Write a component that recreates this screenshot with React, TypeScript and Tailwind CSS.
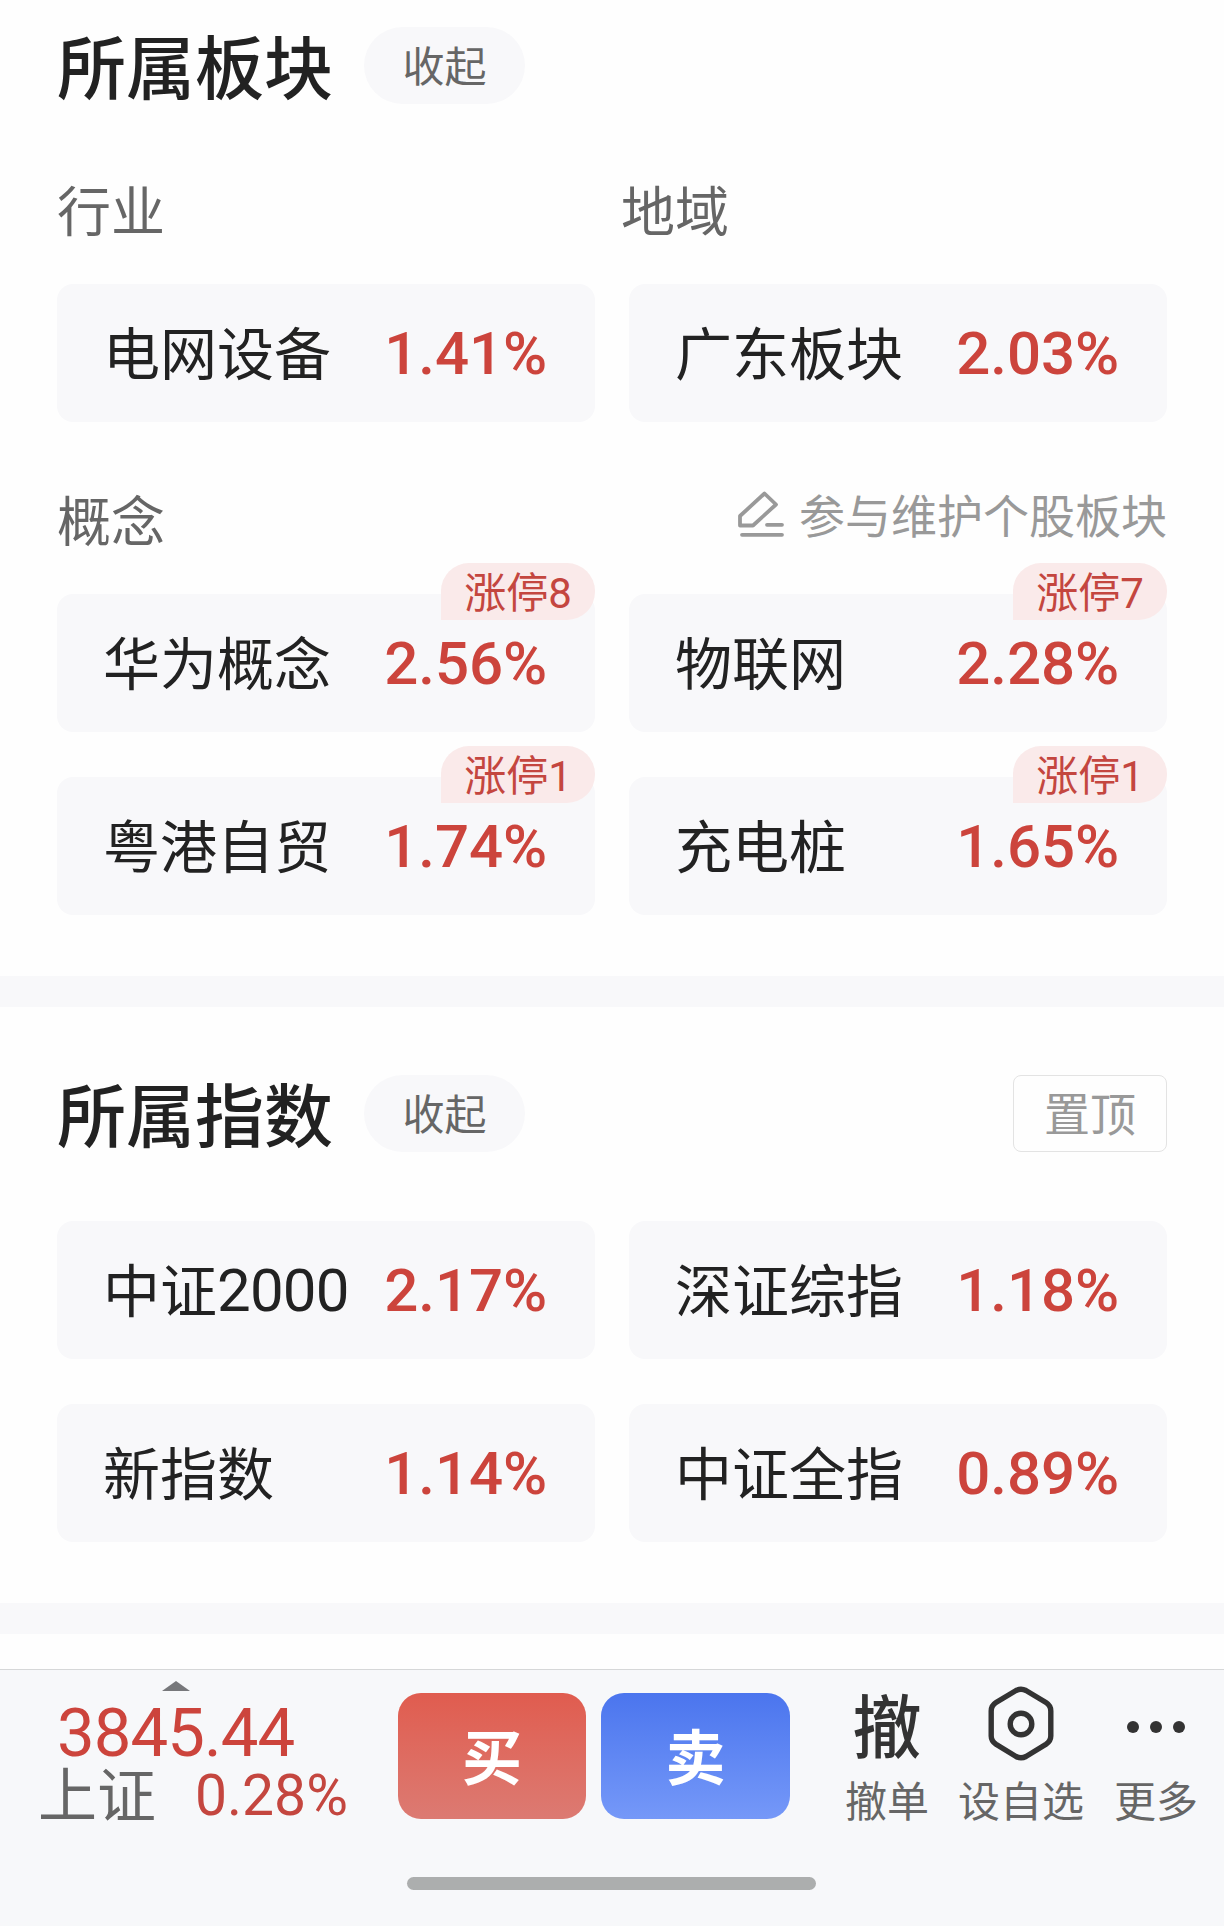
import React from 'react';
import { clsx } from 'clsx';

type Board = {
  name: string;
  digits?: string;
  change: string;
  limitUp?: number;
};

const regions: Board[] = [
  { name: '电网设备', change: '1.41%' },
  { name: '广东板块', change: '2.03%' },
];

const concepts: Board[] = [
  { name: '华为概念', change: '2.56%', limitUp: 8 },
  { name: '物联网', change: '2.28%', limitUp: 7 },
  { name: '粤港自贸', change: '1.74%', limitUp: 1 },
  { name: '充电桩', change: '1.65%', limitUp: 1 },
];

const indices: Board[] = [
  { name: '中证', digits: '2000', change: '2.17%' },
  { name: '深证综指', change: '1.18%' },
  { name: '新指数', change: '1.14%' },
  { name: '中证全指', change: '0.89%' },
];

function BoardCard({ name, digits, change, limitUp }: Board) {
  return (
    <div className="relative flex h-[138px] items-center justify-between rounded-2xl bg-[#f8f8fa] pr-12 pl-[46px]">
      <span className="flex pt-[5px] text-[57px] leading-[60px] text-[#222]">
        {name}
        {digits && <span className="-mt-[2px] text-[60px] tracking-[-0.8px]">{digits}</span>}
      </span>
      <span className="pt-[2px] text-[60px] leading-[60px] font-medium tracking-[-0.1px] text-[#cc443c]">{change}</span>
      {limitUp !== undefined && (
        <span className="absolute -top-[31px] right-0 flex h-[57px] w-[154px] items-center justify-center rounded-[28px] rounded-bl-none bg-[#faeaea] pt-[4px] text-[42px] leading-[53px] text-[#c4463f]">
          涨停{limitUp}
        </span>
      )}
    </div>
  );
}

function BoardGrid({ items, className }: { items: Board[]; className?: string }) {
  return (
    <div className={clsx('grid grid-cols-2 gap-x-[34px] gap-y-[45px]', className)}>
      {items.map((item) => (
        <BoardCard key={item.change} {...item} />
      ))}
    </div>
  );
}

function SectionTitle({ title, children }: { title: string; children?: React.ReactNode }) {
  return (
    <div className="flex h-[77px] items-center">
      <h2 className="pt-[9px] text-[69px] leading-[77px] font-[450] text-[#222]">{title}</h2>
      <button className="ml-[31px] h-[77px] w-[161px] rounded-full bg-[#f8f8fa] pt-[4px] text-[42px] leading-[73px] text-[#666]">
        收起
      </button>
      {children}
    </div>
  );
}

function EditIcon() {
  return (
    <svg className="h-[48px] w-[48px]" viewBox="0 0 48 48" fill="none" stroke="#999" strokeWidth="3.8" strokeLinecap="round" strokeLinejoin="round">
      <path d="M3 34.500V25L27.500 2.500L39 13.500L16 34.500Z" />
      <path d="M30 33.800H45M5 43.800H45" />
    </svg>
  );
}

function HexIcon() {
  return (
    <svg className="h-[76px] w-[70px]" viewBox="0 0 70 76" fill="none" stroke="#333" strokeWidth="5.4">
      <path d="M30 4.500Q35 2 40 4.500L60 16.500Q64.800 19.500 64.800 25V50Q64.800 55 60 58.200L40 70.500Q35 73 30 70.500L10 58.200Q5.200 55 5.200 50V25Q5.200 19.500 10 16.500Z" />
      <circle cx="35" cy="38" r="10.8" />
    </svg>
  );
}

export default function App() {
  return (
    <div className="flex h-[1926px] w-[1224px] flex-col overflow-hidden bg-[#fefefe] font-[Roboto,'Noto_Sans_CJK_SC',sans-serif]">
      {/* 所属板块 */}
      <section className="h-[976px] px-[57px] pt-[27px]">
        <SectionTitle title="所属板块" />
        <div className="mt-[80px] grid h-[60px] grid-cols-2 text-[54px] leading-[60px] text-[#666]">
          <span>行业</span>
          <span className="pl-[9px]">地域</span>
        </div>
        <BoardGrid items={regions} className="mt-[40px]" />
        <div className="mt-[69px] flex h-[60px] justify-between">
          <span className="pt-[3px] text-[54px] leading-[60px] text-[#666]">概念</span>
          <span className="flex items-start gap-[14px] text-[46px] leading-[48px] text-[#999]">
            <EditIcon />
            <span className="pt-[2px]">参与维护个股板块</span>
          </span>
        </div>
        <BoardGrid items={concepts} className="mt-[43px]" />
      </section>

      <div className="h-[31px] bg-[#f8f8fa]" />

      {/* 所属指数 */}
      <section className="h-[596px] px-[57px] pt-[68px]">
        <SectionTitle title="所属指数">
          <button className="ml-auto h-[77px] w-[154px] rounded-lg border border-[#e3e3e3] pt-[4px] text-[46px] leading-[71px] text-[#999]">
            置顶
          </button>
        </SectionTitle>
        <BoardGrid items={indices} className="mt-[69px]" />
      </section>

      <div className="h-[31px] bg-[#f8f8fa]" />

      {/* 底部交易栏 */}
      <footer className="mt-[35px] flex flex-1 flex-col border-t border-[#d6d7d8] bg-[#f7f8fa]">
        <div className="flex h-[160px]">
          <div className="flex w-[398px] shrink-0 flex-col">
            <svg className="mt-[11px] ml-[162px] h-[10px] w-[28px]" viewBox="0 0 28 10">
              <path d="M14 0L28 10H0Z" fill="#77787b" />
            </svg>
            <span className="mt-[10px] ml-[57px] text-[67px] leading-[64px] tracking-[-0.9px] text-[#cc443c]">3845.44</span>
            <div className="flex h-[60px] items-start leading-[60px]">
              <span className="ml-[38px] pt-[2px] text-[59px] text-[#666]">上证</span>
              <span className="ml-[39px] pt-px text-[57px] text-[#c4463f]">0.28%</span>
            </div>
          </div>
          <button className="mt-[23px] h-[126px] w-[188px] rounded-[23px] bg-linear-to-b from-[#e05c4f] to-[#dc7a72] pt-[8px] text-[60px] font-bold text-white">
            买
          </button>
          <button className="mt-[23px] ml-[15px] h-[126px] w-[189px] rounded-[23px] bg-linear-to-b from-[#4b75ee] to-[#7598f8] pt-[8px] text-[60px] font-bold text-white">
            卖
          </button>
          <div className="ml-[55px] flex pt-[16px] text-[42px] leading-[48px] text-[#666]">
            <div className="flex w-[84px] flex-col items-center">
              <span className="h-[76px] text-[69px] leading-[87px] font-[450] text-[#333]">撤</span>
              <span className="mt-[17px] whitespace-nowrap">撤单</span>
            </div>
            <div className="ml-[29px] flex w-[126px] flex-col items-center">
              <HexIcon />
              <span className="mt-[17px] whitespace-nowrap">设自选</span>
            </div>
            <div className="ml-[30px] flex w-[84px] flex-col items-center">
              <svg className="h-[76px] w-[60px]" viewBox="0 0 60 76" fill="#333">
                <circle cx="7" cy="41" r="6" />
                <circle cx="30" cy="41" r="6" />
                <circle cx="53" cy="41" r="6" />
              </svg>
              <span className="mt-[17px] whitespace-nowrap">更多</span>
            </div>
          </div>
        </div>
        <div className="mt-[47px] ml-[407px] h-[13px] w-[409px] rounded-full bg-[#acaeae]" />
      </footer>
    </div>
  );
}
